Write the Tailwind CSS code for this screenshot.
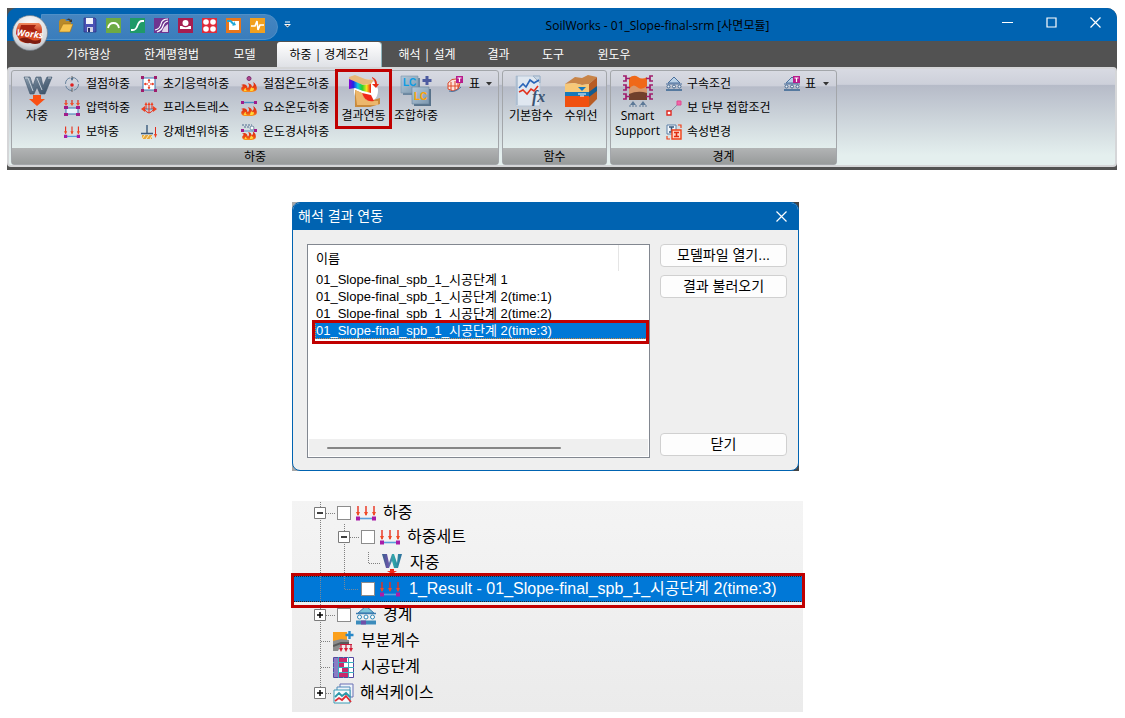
<!DOCTYPE html>
<html lang="ko">
<head>
  <meta charset="UTF-8">
  <meta name="viewport" content="width=device-width, initial-scale=1.0">
  <title>SoilWorks - 01_Slope-final-srm [사면모듈]</title>
  <script src="https://cdn.jsdelivr.net/npm/@tailwindcss/browser@4"></script>
</head>
<body class="bg-white font-['Open_Sans','Noto_Sans_CJK_KR',sans-serif] text-black">

  <!-- 공용 아이콘 -->
  <svg width="0" height="0" class="absolute" aria-hidden="true">
    <defs>
      <linearGradient id="gW" x1="0" y1="0" x2="1" y2="1"><stop offset="0" stop-color="#8fa0b0"/><stop offset=".45" stop-color="#5f7388"/><stop offset="1" stop-color="#34495f"/></linearGradient>
      <linearGradient id="gTreeW" x1="0" y1="0" x2="1" y2="0"><stop offset="0" stop-color="#35608c"/><stop offset=".3" stop-color="#6a55a8"/><stop offset=".55" stop-color="#2fa9a9"/><stop offset="1" stop-color="#2d6d9c"/></linearGradient>
      <linearGradient id="gFire" x1="0" y1="0" x2="0" y2="1"><stop offset="0" stop-color="#d82410"/><stop offset=".7" stop-color="#ee4c14"/><stop offset="1" stop-color="#fa9a1c"/></linearGradient>
      <linearGradient id="gRain" x1="0" y1="0" x2="1" y2="0"><stop offset="0" stop-color="#8a00d0"/><stop offset=".2" stop-color="#1c28e8"/><stop offset=".4" stop-color="#14c8e0"/><stop offset=".6" stop-color="#2ad02a"/><stop offset=".8" stop-color="#f4e61c"/><stop offset="1" stop-color="#f02010"/></linearGradient>
      <linearGradient id="gLc" x1="0" y1="0" x2="1" y2="1"><stop offset="0" stop-color="#b4c8d8"/><stop offset="1" stop-color="#7d98af"/></linearGradient>
      <radialGradient id="gOrb" cx=".5" cy=".3" r=".8"><stop offset="0" stop-color="#ffffff"/><stop offset=".7" stop-color="#d5d8dc"/><stop offset="1" stop-color="#8f959c"/></radialGradient>
      <linearGradient id="gOrbRed" x1="0" y1="0" x2="0" y2="1"><stop offset="0" stop-color="#f08a5e"/><stop offset=".5" stop-color="#c8351c"/><stop offset="1" stop-color="#e8602c"/></linearGradient>
    </defs>
    <symbol id="fire" viewBox="0 0 16 10">
      <path d="M1 9Q-1 6 2 4Q1 3 0 3Q4 1 6 4Q6 6 7 6Q9 4 7 1Q11 2 11 5Q14 3 12 0Q17 3 15.500 8Q14 10 11 10H4Q2 10 1 9Z" fill="url(#gFire)"/>
      <path d="M3 9q0-3 2-3-1 2 1 3zM9 9q0-3 2-4 0 2 2 1 0 3-2 3z" fill="#ffd83a"/>
    </symbol>
    <symbol id="loads" viewBox="0 0 20 16">
      <path d="M2 1v9M10 1v9M18 1v9" stroke="#e8301c" stroke-width="1.400"/>
      <path d="M0 7h4l-2 4zM8 7h4l-2 4zM16 7h4l-2 4z" fill="#f04a24"/>
      <path d="M2 13.500h16" stroke="#5aa0dc" stroke-width="1.600"/>
      <path d="M0 11.500h4v4H0zM16 11.500h4v4h-4z" fill="#a81ca8"/>
    </symbol>
    <symbol id="support" viewBox="0 0 16 16">
      <path d="M8 1l6 6H2z" fill="#b9d0e6" stroke="#4a6f9c"/>
      <path d="M0 8h16M0 13.500h16" stroke="#4a6f9c"/>
      <path d="M0 13h16v2H0z" fill="#55799f"/>
      <g fill="#e6eef6" stroke="#46688f"><circle cx="2.500" cy="10.500" r="1.500"/><circle cx="8" cy="10.500" r="1.500"/><circle cx="13.500" cy="10.500" r="1.500"/></g>
    </symbol>
    <symbol id="caret" viewBox="0 0 6 4"><path d="M0 0h6L3 3.500z" fill="#333"/></symbol>
  </svg>

  <!-- 메인 리본 -->
  <header class="relative mr-2 ml-[7px] mt-2 rounded-tr-[10px] bg-[#525252] pb-[3px]">
    <div class="flex h-[33px] rounded-tl-[10px] rounded-tr-[10px] bg-[#0063b1]">
      <div class="mt-[6px] ml-[34px] flex h-[26px] w-[237px] items-start gap-[9px] rounded-r-full border border-[#4f90c8] bg-gradient-to-b from-[#4585c0] to-[#3a7dbc] pt-[2px] pl-[16px]">
        <button type="button" aria-label="열기"><svg class="h-4 w-[15px]" viewBox="0 0 15 16"><path d="M1 14V4l2-2h4l1 2h5v4" fill="#b88a2a"/><path d="M1 15L5 7h10l-3 8z" fill="#f6c550" stroke="#a06f18" stroke-width=".6"/><path d="M8 3q3-3 5 0l1-1v3h-3l1-1q-2-2-4-1" fill="#3a3a3a"/></svg></button>
        <button type="button" aria-label="저장"><svg class="h-4 w-[15px]" viewBox="0 0 15 16"><path d="M2 1h11l1 1v13H2z" fill="#4a52b4" stroke="#2c3280" stroke-width=".7"/><path d="M4 1h7v6H4z" fill="#f2f4fa"/><path d="M5 10h6v5H5z" fill="#cfd3e6"/><path d="M6 11h2v4H6z" fill="#272c66"/></svg></button>
        <button type="button" aria-label="아치"><svg class="h-4 w-[15px]" viewBox="0 0 15 16"><path d="M0 1h15v15H0z" fill="#6eaa44"/><path d="M2 11q1-5 5.500-5T13 11" fill="none" stroke="#fff" stroke-width="1.800"/></svg></button>
        <button type="button" aria-label="사면"><svg class="h-4 w-[15px]" viewBox="0 0 15 16"><path d="M0 1h15v15H0z" fill="#1f9a68"/><path d="M1 13h2q3 0 4.500-4.500T12 4h2" fill="none" stroke="#fff" stroke-width="1.800"/></svg></button>
        <button type="button" aria-label="지반"><svg class="h-4 w-[15px]" viewBox="0 0 15 16"><path d="M0 1h15v15H0z" fill="#6f3590"/><path d="M8 15q1-5 6-8v8z" fill="#e2d2ea"/><path d="M1 13q5-1 6-6t7-5M3 15q5-2 6-6t5-5" fill="none" stroke="#fff" stroke-width="1.200"/></svg></button>
        <button type="button" aria-label="기초"><svg class="h-4 w-[15px]" viewBox="0 0 15 16"><path d="M0 1h15v15H0z" fill="#a61e50"/><circle cx="7.500" cy="6" r="3" fill="#fff"/><path d="M2 9h2q3.500 2.500 7 0h2v3H2z" fill="#fff"/></svg></button>
        <button type="button" aria-label="말뚝"><svg class="h-4 w-[15px]" viewBox="0 0 15 16"><path d="M0 1h15v15H0z" fill="#e02c3a"/><g fill="#fff"><circle cx="4" cy="5" r="2.800"/><circle cx="11" cy="5" r="2.800"/><circle cx="4" cy="12" r="2.800"/><circle cx="11" cy="12" r="2.800"/></g></svg></button>
        <button type="button" aria-label="침투"><svg class="h-4 w-[15px]" viewBox="0 0 15 16"><path d="M0 1h15v15H0z" fill="#e8761c"/><path d="M3 4h10v9H3z" fill="#fff"/><path d="M1 3h4l3 3v-2l2 4-4 1 1-1-3-3H1z" fill="#20a8d8"/></svg></button>
        <button type="button" aria-label="동해석"><svg class="h-4 w-[15px]" viewBox="0 0 15 16"><path d="M0 1h15v15H0z" fill="#f2a01e"/><path d="M1 9h4l2-5 1 9 2-5h4" fill="none" stroke="#fff" stroke-width="1.600"/></svg></button>
      </div>
      <button type="button" class="ml-[6px] w-[7px]" aria-label="빠른 실행 사용자 지정"><svg class="h-[7px] w-[7px]" viewBox="0 0 7 7"><path d="M1 1h5" stroke="#fff"/><path d="M0 3h7L3.500 6.500z" fill="#fff"/><path d="M2 4h3L3.500 5.500z" fill="#333"/></svg></button>
      <h1 class="flex-1 pt-[10px] pl-[38px] text-center text-xs leading-4">SoilWorks - 01_Slope-final-srm [사면모듈]</h1>
      <div class="flex h-[29px] text-white">
        <button type="button" class="flex w-[43px] items-center justify-center" aria-label="최소화"><svg class="h-[11px] w-[11px]" viewBox="0 0 11 11"><path d="M0 5.500h11" stroke="currentColor"/></svg></button>
        <button type="button" class="flex w-[44px] items-center justify-center" aria-label="최대화"><svg class="h-[11px] w-[11px]" viewBox="0 0 11 11"><path d="M1 1h9v9H1z" fill="none" stroke="currentColor" stroke-width="1.200"/></svg></button>
        <button type="button" class="flex w-[44px] items-center justify-center" aria-label="닫기"><svg class="h-[11px] w-[11px]" viewBox="0 0 11 11"><path d="M.5.5l10 10M10.500.5l-10 10" stroke="currentColor" stroke-width="1.200"/></svg></button>
      </div>
    </div>

    <!-- 시작 단추 -->
    <button type="button" class="absolute top-[7px] left-[5px]" aria-label="SoilWorks 메뉴">
      <svg class="h-[36px] w-[36px]" viewBox="0 0 36 36">
        <circle cx="18" cy="18" r="17.500" fill="url(#gOrb)" stroke="#6d7680" stroke-width=".6"/>
        <path d="M7 8h20q3 2 3 7l-1 12q-6 2-11 0-6 2-10-1l-4-7Q4 12 7 8z" fill="url(#gOrbRed)"/>
        <path d="M9 10h15l-2 3 4 3-5 3-2-3-7 1-5 4 1-7z" fill="#a5220f"/>
        <path d="M7 24q6-3 11 0t11 0l-1 4q-5 2-10 0-6 1-11-4z" fill="#7e1c10"/>
        <text x="18" y="22" font-size="9" font-weight="700" font-style="italic" text-anchor="middle" fill="#fff" transform="rotate(6 18 18)">Works</text>
      </svg>
    </button>

    <nav class="flex h-[26px] items-end pl-[43px] text-xs text-white">
      <button type="button" class="h-6 w-[77px]">기하형상</button>
      <button type="button" class="h-6 w-[89px]">한계평형법</button>
      <button type="button" class="mr-[4px] h-6 w-[57px]">모델</button>
      <button type="button" class="h-[25px] w-[104px] rounded-t-[3px] bg-gradient-to-b from-white to-[#dfe1e6] text-black shadow-[1px_0_0_#8fb4bc]">하중 | 경계조건</button>
      <button type="button" class="ml-[2px] h-6 w-[88px]">해석 | 설계</button>
      <button type="button" class="h-6 w-[55px]">결과</button>
      <button type="button" class="h-6 w-[54px]">도구</button>
      <button type="button" class="h-6 w-[68px]">윈도우</button>
    </nav>

    <div class="flex h-[100px] gap-[3px] rounded-[4px] border-2 border-[#d5d6d8] bg-[linear-gradient(#d8dae2_0%,#cdd0da_16%,#b6bbc8_17%,#e4efee_90%)] px-[2px] pt-px">
      <!-- 하중 그룹 -->
      <section class="flex w-[488px] shrink-0 flex-col rounded-[3px] border border-[#a3a6aa] bg-[linear-gradient(#d8dae2_0%,#cdd0da_16%,#b6bbc8_17%,#e4efee_85%)]">
        <div class="flex flex-1 pt-px">
          <button type="button" class="flex w-[50px] flex-col items-center gap-px pt-[3px] text-xs">
            <svg class="h-8 w-8" viewBox="0 0 32 32"><path d="M3 2h6l3 9 3-9h5l2 9 4-9h5l-7 17h-5l-3-7-3 7H9z" fill="url(#gW)" stroke="#3f556c" stroke-width=".6"/><path d="M4 3h3l5 13M16 3l5 12M27 3h3" fill="none" stroke="#c4ced8" stroke-width="1"/><path d="M12 20h8v4h4l-8 7-8-7h4z" fill="#fa5014"/></svg>
            <span>자중</span>
          </button>
          <div class="flex w-[77px] flex-col pl-[2px] text-xs">
            <button type="button" class="flex h-6 items-center gap-[6px]"><svg class="h-4 w-4" viewBox="0 0 16 16"><circle cx="8" cy="8" r="6.500" fill="none" stroke="#66829c" stroke-dasharray="8 2"/><path d="M8 0v4M8 12v4" stroke="#666"/><path d="M6.500 2h3L8 5z" fill="#53708c"/><circle cx="8" cy="9" r="1.800" fill="#e02020"/></svg>절점하중</button>
            <button type="button" class="flex h-6 items-center gap-[6px]"><svg class="h-4 w-4" viewBox="0 0 16 16"><path d="M2 0v4M8 0v4M14 0v4" stroke="#e02c1c" stroke-width="1.200"/><path d="M0 3h4L2 6zM6 3h4L8 6zM12 3h4l-2 3z" fill="#f0502c"/><path d="M2 8h12v6H2z" fill="#e8f2fa" stroke="#3f79b4"/><path d="M0 6h4v3H0zM12 6h4v3h-4zM0 13h4v3H0zM12 13h4v3h-4z" fill="#a01c8c"/></svg>압력하중</button>
            <button type="button" class="flex h-6 items-center gap-[6px]"><svg class="h-4 w-4"><use href="#loads"/></svg>보하중</button>
          </div>
          <div class="flex w-[100px] flex-col pl-[2px] text-xs">
            <button type="button" class="flex h-6 items-center gap-[6px]"><svg class="h-4 w-4" viewBox="0 0 16 16"><path d="M2 2h12v12H2z" fill="#fff" stroke="#3f79b4"/><path d="M8 3v4M8 9v4M3 8h4M9 8h4" stroke="#e02c1c"/><path d="M6.500 5L8 3l1.500 2zM6.500 11L8 13l1.500-2zM5 6.500L3 8l2 1.500zM11 6.500L13 8l-2 1.500z" fill="#f04020"/><path d="M0 0h3v3H0zM13 0h3v3h-3zM0 13h3v3H0zM13 13h3v3h-3z" fill="#a01c6c"/></svg>초기응력하중</button>
            <button type="button" class="flex h-6 items-center gap-[6px]"><svg class="h-4 w-4" viewBox="0 0 16 16"><path d="M2 9h12" stroke="#4a74a0"/><path d="M0 9l4-3v6zM16 9l-4-3v6z" fill="#f04020"/><path d="M3 9q3 4 5 4t5-4M5 9V4M8 13V4M11 9V4" fill="none" stroke="#e8301c"/><path d="M3.500 5L5 2l1.500 3zM6.500 5L8 2l1.500 3zM9.500 5L11 2l1.500 3z" fill="#f04020"/></svg>프리스트레스</button>
            <button type="button" class="flex h-6 items-center gap-[6px]"><svg class="h-4 w-4" viewBox="0 0 16 16"><path d="M6 1v8M0 9.500h12" stroke="#3b5a7c" stroke-width="1.400"/><path d="M1 11h10v4H1z" fill="#e8a83c"/><path d="M1 15l3-4M5 15l3-4M9 15l2-3" stroke="#fff0c0"/><path d="M14.500 3v8" stroke="#e02c1c"/><path d="M13 10h3l-1.500 4z" fill="#f04020"/></svg>강제변위하중</button>
          </div>
          <div class="flex w-[96px] flex-col pl-[2px] text-xs">
            <button type="button" class="flex h-6 shrink-0 items-center gap-[6px] whitespace-nowrap"><svg class="h-4 w-4 shrink-0" viewBox="0 0 16 16"><circle cx="8" cy="2.500" r="2" fill="#b0468c" stroke="#7c2c70"/><use href="#fire" y="6" width="16" height="10"/></svg>절점온도하중</button>
            <button type="button" class="flex h-6 shrink-0 items-center gap-[6px] whitespace-nowrap"><svg class="h-4 w-4 shrink-0" viewBox="0 0 16 16"><path d="M2 2.500h12" stroke="#4a8cc4" stroke-width="1.400"/><path d="M0 1h3v3H0zM13 1h3v3h-3z" fill="#a01c8c"/><use href="#fire" y="6" width="16" height="10"/></svg>요소온도하중</button>
            <button type="button" class="flex h-6 shrink-0 items-center gap-[6px] whitespace-nowrap"><svg class="h-4 w-4 shrink-0" viewBox="0 0 16 16"><path d="M1 1h10M3 3h10" stroke="#506c90" stroke-dasharray="2 1"/><circle cx="11" cy="4" r="2" fill="#fff" stroke="#7890a8"/><path d="M2 7h12" stroke="#4a8cc4"/><path d="M0 5h3v3H0zM13 5h3v3h-3z" fill="#a01c8c"/><use href="#fire" x="1" y="7" width="14" height="9"/></svg>온도경사하중</button>
          </div>
          <button type="button" class="relative flex w-[57px] flex-col items-center gap-px pt-[3px] text-xs">
            <svg class="h-8 w-8" viewBox="0 0 32 32"><circle cx="18" cy="16" r="12" fill="#fff"/><path d="M1 2l6-2 10 4 9 1-3 4-8 1-14-5z" fill="#e8b878"/><path d="M1 4l14 6 8-1v9l-8-2-8-3-6 1z" fill="url(#gRain)"/><path d="M7 15l7 3q2 8 8 8l10-3v6l-10 3H7z" fill="#c88a3c"/><path d="M7 15l7 3q2 8 8 8h8v4H9z" fill="#ecb76c"/><path d="M14 18l9 2 3 6q-9 2-12-8z" fill="#f02818"/><path d="M24 2q5 2 5 7h2l-3 4-4-4h3q0-4-3-6z" fill="#e82c14"/></svg>
            <span>결과연동</span>
            <span class="pointer-events-none absolute -top-[3px] left-0 h-[60px] w-[57px] border-3 border-[#c00000]"></span>
          </button>
          <button type="button" class="flex w-[48px] flex-col items-center gap-px pt-[3px] text-xs">
            <svg class="h-8 w-8" viewBox="0 0 32 32"><path d="M3 3h17v17H3z" fill="#6c87a0"/><path d="M1 1h17v17H1z" fill="url(#gLc)" stroke="#7895ad" stroke-width=".6"/><path d="M14 14h17v17H14z" fill="#58728a"/><path d="M12 12h17v17H12z" fill="url(#gLc)" stroke="#6784a0" stroke-width=".6"/><path d="M27 1v9M22.500 5.500h9" stroke="#4c5aa0" stroke-width="3"/><text x="3" y="11" font-size="10" font-weight="700" font-family="Liberation Sans" fill="#0c9ce4">LC</text><text x="14" y="25" font-size="10" font-weight="700" font-family="Liberation Sans" fill="#ffa400">LC</text></svg>
            <span>조합하중</span>
          </button>
          <button type="button" class="ml-[7px] flex h-6 items-center text-xs"><svg class="h-4 w-4" viewBox="0 0 16 16"><path d="M1 7q4-5 8-4l4 4-2 6-5 2-5-2z" fill="#fbe3dc" stroke="#d8482c"/><path d="M4 6v8M8 5v10M11 7v6M1 10h12" stroke="#e04a28"/><path d="M2 15q6 2 12-4" stroke="#4a74a0" fill="none"/><path d="M9 0h7v7H9z" fill="#b81c8c"/><path d="M10.500 2h4M12.500 2v4" stroke="#fff" stroke-width="1.200"/></svg><span class="ml-[6px]">표</span><svg class="ml-[6px] h-1 w-[6px]"><use href="#caret"/></svg></button>
        </div>
        <h2 class="h-4 bg-gradient-to-b from-[#b2b4b5] to-[#989b9b] text-center text-xs leading-[17px]">하중</h2>
      </section>

      <!-- 함수 그룹 -->
      <section class="flex w-[105px] shrink-0 flex-col rounded-[3px] border border-[#a3a6aa] bg-[linear-gradient(#d8dae2_0%,#cdd0da_16%,#b6bbc8_17%,#e4efee_85%)]">
        <div class="flex flex-1 pt-px pl-[3px]">
          <button type="button" class="flex w-[50px] flex-col items-center gap-px pt-[3px] text-xs">
            <svg class="h-8 w-8" viewBox="0 0 32 32"><path d="M1 1h24v30H1z" fill="#dfe7f0" stroke="#b7c5d5"/><path d="M2 1v29" stroke="#8da4bc"/><path d="M18 1l7 7V1z" fill="#c8d6e4" stroke="#9cb0c6"/><path d="M4 13l4-4 3 3 4-7 4 3 5-3" fill="none" stroke="#2864b8" stroke-width="1.600"/><path d="M4 17l4-2 4 4 4-5 3 2 4-5" fill="none" stroke="#e0301c" stroke-width="1.600"/><text x="17" y="27" font-size="16" font-style="italic" font-weight="700" font-family="Liberation Serif" fill="#3c5472">fx</text></svg>
            <span>기본함수</span>
          </button>
          <button type="button" class="flex w-[50px] flex-col items-center gap-px pt-[3px] text-xs">
            <svg class="h-8 w-8" viewBox="0 0 32 32"><path d="M0 9l10-7 7 1 6-3 9 2-8 7-7 1-8-2z" fill="#c88448"/><path d="M0 9l9-1 8 2 7-1v9H0z" fill="#f7c878"/><path d="M24 9l8-7v22l-8 8z" fill="#b85c24"/><path d="M0 17h24v4H0z" fill="#1878b8"/><path d="M0 21h24v11H0z" fill="#f05010"/><path d="M24 17l8-6v5l-8 6z" fill="#125c90"/><path d="M13 12h8l-4 4z" fill="#1478c0"/><path d="M13 19h8M15 21h4" stroke="#fff"/></svg>
            <span>수위선</span>
          </button>
        </div>
        <h2 class="h-4 bg-gradient-to-b from-[#b2b4b5] to-[#989b9b] text-center text-xs leading-[17px]">함수</h2>
      </section>

      <!-- 경계 그룹 -->
      <section class="flex w-[227px] shrink-0 flex-col rounded-[3px] border border-[#a3a6aa] bg-[linear-gradient(#d8dae2_0%,#cdd0da_16%,#b6bbc8_17%,#e4efee_85%)]">
        <div class="flex flex-1 pt-px">
          <button type="button" class="flex w-[53px] flex-col items-center gap-px pt-[3px] text-xs leading-[15px]">
            <svg class="h-8 w-8 shrink-0" viewBox="0 0 32 32"><path d="M7 3q5-4 9-1t9 0v23H7z" fill="#f06818"/><path d="M7 14q4-6 8-2t10-1v14H7z" fill="#d8986c"/><path d="M7 19q9-4 18-1v7H7z" fill="#70402c"/><g fill="none" stroke="#a01c6c" stroke-width="1.700"><path d="M1 1h3v5H1M1 10h3v5H1M1 19h3v5H1M31 1h-3v5h3M31 10h-3v5h3M31 19h-3v5h3M4 3.500h4M4 12.500h4M4 21.500h4M24 3.500h4M24 12.500h4M24 21.500h4"/></g><path d="M11 26l3 4H8zM21 26l3 4h-6z" fill="#5c7896"/><path d="M7 31h8M17 31h8" stroke="#5c7896" stroke-dasharray="2 1"/></svg>
            <span>Smart Support</span>
          </button>
          <div class="flex w-[118px] flex-col pl-[2px] text-xs">
            <button type="button" class="flex h-6 items-center gap-[5px]"><svg class="h-4 w-4"><use href="#support"/></svg>구속조건</button>
            <button type="button" class="flex h-6 items-center gap-[5px]"><svg class="h-4 w-4" viewBox="0 0 16 16"><path d="M4 12l8-8" stroke="#8294a8"/><path d="M11 1h4v4h-4z" fill="#f068a8" stroke="#e04890"/><path d="M1 11h4v4H1z" fill="#fff" stroke="#e02820" stroke-width="1.400"/></svg>보 단부 접합조건</button>
            <button type="button" class="flex h-6 items-center gap-[5px]"><svg class="h-4 w-4" viewBox="0 0 16 16"><path d="M1 1h9v9H1z" fill="#f2f6fa" stroke="#5c80a8"/><path d="M3 3h5M5.500 3v5M3 8h5" stroke="#38587c" stroke-width="1.500"/><path d="M6 6h9v9H6z" fill="#ffd8c8" stroke="#f04018" stroke-width="1.400"/><path d="M8 8.500h5M10.500 8v5M8 12.500h5" stroke="#e02c10" stroke-width="1.600"/><path d="M12 1h3v3M1 12v3h3" fill="none" stroke="#f04018" stroke-width="1.200"/></svg>속성변경</button>
          </div>
          <button type="button" class="ml-[2px] flex h-6 items-center text-xs"><svg class="h-4 w-4" viewBox="0 0 16 16"><use href="#support" width="16" height="16"/><path d="M9 0h7v7H9z" fill="#b81c8c"/><path d="M10.500 2h4M12.500 2v4" stroke="#fff" stroke-width="1.200"/></svg><span class="ml-[5px]">표</span><svg class="ml-[7px] h-1 w-[6px]"><use href="#caret"/></svg></button>
        </div>
        <h2 class="h-4 bg-gradient-to-b from-[#b2b4b5] to-[#989b9b] text-center text-xs leading-[17px]">경계</h2>
      </section>
    </div>
  </header>

  <!-- 해석 결과 연동 대화상자 -->
  <div class="mt-8 ml-[292px] w-[507px] bg-[linear-gradient(to_right,#a8a8a8_50%,#444_50%)] font-['Liberation_Sans','Noto_Sans_CJK_KR',sans-serif]">
    <div role="dialog" aria-labelledby="dlgTitle" class="overflow-hidden rounded-[8px] border border-[#0063b1] bg-[#efefef]">
      <div class="flex h-[27px] items-center justify-between bg-[#0063b1] pr-[11px] pl-[5px] text-white">
        <h2 id="dlgTitle" class="pb-[2px] text-sm leading-5">해석 결과 연동</h2>
        <button type="button" aria-label="닫기"><svg class="h-[11px] w-[11px]" viewBox="0 0 11 11"><path d="M.5.5l10 10M10.500.5l-10 10" stroke="currentColor" stroke-width="1.200"/></svg></button>
      </div>
      <div class="flex gap-[10px] pt-[14px] pr-[11px] pb-[12px] pl-[14px]">
        <div class="flex h-[214px] flex-1 flex-col border border-[#828790] bg-white px-px pb-px text-[13px] leading-[17px]">
          <table class="w-full">
            <thead>
              <tr class="h-[26px]">
                <th class="w-[309px] border-r border-[#e5e5e5] pl-[7px] text-left font-normal">이름</th>
                <th></th>
              </tr>
            </thead>
            <tbody>
              <tr><td colspan="2" class="p-0 pl-[7px]">01_Slope-final_spb_1_시공단계 1</td></tr>
              <tr><td colspan="2" class="p-0 pl-[7px]">01_Slope-final_spb_1_시공단계 2(time:1)</td></tr>
              <tr><td colspan="2" class="p-0 pl-[7px]">01_Slope-final_spb_1_시공단계 2(time:2)</td></tr>
              <tr>
                <td colspan="2" class="relative p-0 pl-[6px]">
                  <div class="bg-[#0078d7] pl-px text-white outline outline-dotted outline-[#d08a40] -outline-offset-1">01_Slope-final_spb_1_시공단계 2(time:3)</div>
                  <span class="pointer-events-none absolute -top-[2px] -right-px -bottom-[5px] left-[3px] border-3 border-[#c00000]"></span>
                </td>
              </tr>
            </tbody>
          </table>
          <div class="mt-auto flex h-[17px] items-center bg-[#efefef] pl-[18px]"><div class="h-[2px] w-[234px] rounded-full bg-[#858585]"></div></div>
        </div>
        <div class="flex w-[127px] flex-col gap-2 text-sm">
          <button type="button" class="flex h-[23px] items-center justify-center rounded-[4px] border border-[#d0d0d0] bg-[#fdfdfd] pb-[2px]">모델파일 열기...</button>
          <button type="button" class="flex h-[23px] items-center justify-center rounded-[4px] border border-[#d0d0d0] bg-[#fdfdfd] pb-[2px]">결과 불러오기</button>
          <button type="button" class="mt-auto mb-[2px] flex h-[23px] items-center justify-center rounded-[4px] border border-[#d0d0d0] bg-[#fdfdfd] pb-[2px]">닫기</button>
        </div>
      </div>
    </div>
  </div>

  <!-- 작업 트리 -->
  <ul class="mt-[30px] ml-[292px] w-[511px] bg-gradient-to-b from-[#f4f4f4] to-[#ebebeb] pb-[6px] font-['Liberation_Sans','Noto_Sans_CJK_KR',sans-serif] text-base leading-6">
    <li class="flex h-[23px] items-center overflow-hidden">
      <svg class="h-[26px] w-[45px] shrink-0" viewBox="0 0 45 26"><path d="M28.500 0v26M34 13.500h9" stroke="#808080" stroke-dasharray="1 1"/><path d="M22.500 7.500h11v11h-11z" fill="#fff" stroke="#7a7a7a"/><path d="M25 13h6" stroke="#000" stroke-width="1.500"/></svg>
      <input id="n1" type="checkbox" class="h-[14px] w-[14px] appearance-none border border-[#8c8c8c] bg-white">
      <svg class="ml-[5px] h-4 w-5"><use href="#loads"/></svg>
      <label for="n1" class="ml-[7px]">하중</label>
    </li>
    <li class="flex h-[26px] items-center">
      <svg class="h-[26px] w-[69px] shrink-0" viewBox="0 0 69 26"><path d="M28.500 0v26M52.500 0v26M58 13.500h9" stroke="#808080" stroke-dasharray="1 1"/><path d="M46.500 7.500h11v11h-11z" fill="#fff" stroke="#7a7a7a"/><path d="M49 13h6" stroke="#000" stroke-width="1.500"/></svg>
      <input id="n2" type="checkbox" class="h-[14px] w-[14px] appearance-none border border-[#8c8c8c] bg-white">
      <svg class="ml-[5px] h-4 w-5"><use href="#loads"/></svg>
      <label for="n2" class="ml-[7px]">하중세트</label>
    </li>
    <li class="flex h-[26px] items-center">
      <svg class="h-[26px] w-[90px] shrink-0" viewBox="0 0 90 26"><path d="M28.500 0v26M52.500 0v26M76.500 2v11.500h12" fill="none" stroke="#808080" stroke-dasharray="1 1"/></svg>
      <svg class="h-[22px] w-5" viewBox="0 0 20 22"><path d="M0 2h5l2 9 3-9h2l3 9 1-9h4l-4 14h-4l-2-7-3 7H4z" fill="url(#gTreeW)"/><path d="M5 19h3v-2h4v2h3l-5 3z" fill="#f02818"/></svg>
      <span class="ml-2">자중</span>
    </li>
    <li class="relative flex h-[26px] items-center border-y border-dotted border-[#222] bg-[#0078d7] text-white">
      <svg class="h-[26px] w-[69px] shrink-0" viewBox="0 0 69 26"><path d="M28.500 0v26M52.500 0v13.500h14" fill="none" stroke="#7a8896" stroke-dasharray="1 1"/></svg>
      <input id="n3" type="checkbox" class="h-[14px] w-[14px] appearance-none border border-[#8c8c8c] bg-white">
      <svg class="ml-[5px] h-4 w-5"><use href="#loads"/></svg>
      <label for="n3" class="ml-[9px]">1_Result - 01_Slope-final_spb_1_시공단계 2(time:3)</label>
      <span class="pointer-events-none absolute -top-1 -right-[2px] -bottom-[7px] -left-px border-3 border-[#c00000]"></span>
    </li>
    <li class="flex h-[26px] items-center">
      <svg class="h-[26px] w-[45px] shrink-0" viewBox="0 0 45 26"><path d="M28.500 0v26M34 13.500h9" stroke="#808080" stroke-dasharray="1 1"/><path d="M22.500 7.500h11v11h-11z" fill="#fff" stroke="#7a7a7a"/><path d="M25 13h6M28 10v6" stroke="#000" stroke-width="1.500"/></svg>
      <input id="n4" type="checkbox" class="h-[14px] w-[14px] appearance-none border border-[#8c8c8c] bg-white">
      <svg class="ml-[5px] h-5 w-5" viewBox="0 0 20 20"><path d="M10 1l8 7H2z" fill="#7cc4d8" stroke="#3c7cb0"/><path d="M0 8.500h20" stroke="#3c7cb0" stroke-width="1.500"/><g fill="#fff" stroke="#2f88b8"><circle cx="3.500" cy="12" r="2"/><circle cx="10" cy="12" r="2"/><circle cx="16.500" cy="12" r="2"/></g><path d="M0 15.500h20v4H0z" fill="#3c8cbc"/><path d="M5 15.500h5v4H5z" fill="#7050a8"/></svg>
      <label for="n4" class="ml-[7px]">경계</label>
    </li>
    <li class="flex h-[26px] items-center">
      <svg class="h-[26px] w-[41px] shrink-0" viewBox="0 0 41 26"><path d="M28.500 0v26M29 13.500h10" stroke="#808080" stroke-dasharray="1 1"/></svg>
      <svg class="h-[21px] w-[21px]" viewBox="0 0 21 21"><path d="M0 1h14v9H0z" fill="#fba01c"/><path d="M0 10l8-2 8 1v5H8l-3 6H0z" fill="#8c8c8c"/><path d="M0 15l8-3h8" stroke="#5a5a5a" fill="none" stroke-width="2"/><path d="M16.500 0v8M12.500 4h8" stroke="#2888c8" stroke-width="2.400"/><path d="M7 13.500h12M8 14v5M13 14v5M18 14v5" stroke="#c81c3c" stroke-width="1.200"/><path d="M6 17h4l-2 4zM11 17h4l-2 4zM16 17h4l-2 4z" fill="#d81c34"/></svg>
      <span class="ml-[7px]">부분계수</span>
    </li>
    <li class="flex h-[26px] items-center">
      <svg class="h-[26px] w-[41px] shrink-0" viewBox="0 0 41 26"><path d="M28.500 0v26M29 13.500h10" stroke="#808080" stroke-dasharray="1 1"/></svg>
      <svg class="h-[21px] w-[21px]" viewBox="0 0 21 21"><path d="M.5.5h20v20H.5z" fill="#fff" stroke="#5548a0"/><path d="M5.500 0v21M10.500 0v21M15.500 0v21M0 5.500h21M0 10.500h21M0 15.500h21" stroke="#3cb0c0"/><path d="M1 1h4v19H1z" fill="#8a7cc4"/><path d="M6 1h8v4H6zM6 6h5v4H6zM9 11h6v4H9zM6 16h9v4H6z" fill="#c8286c"/></svg>
      <span class="ml-[7px]">시공단계</span>
    </li>
    <li class="flex h-[26px] items-center">
      <svg class="h-[26px] w-[41px] shrink-0" viewBox="0 0 41 26"><path d="M28.500 0v8M34 13.500h6" stroke="#808080" stroke-dasharray="1 1"/><path d="M22.500 7.500h11v11h-11z" fill="#fff" stroke="#7a7a7a"/><path d="M25 13h6M28 10v6" stroke="#000" stroke-width="1.500"/></svg>
      <svg class="h-[21px] w-[21px]" viewBox="0 0 21 21"><path d="M7 1h13v13H7z" fill="#eef4fa" stroke="#6a70b4"/><path d="M4 4h13v13H4z" fill="#eef4fa" stroke="#5088b8"/><path d="M1 7h16v13H1z" fill="#f6fafc" stroke="#3c9cb4"/><path d="M2 14l4-4 3 3 4-3 4 4" fill="none" stroke="#2c98a8" stroke-width="1.800"/><path d="M2 18l4-3 3 2 4-4 5 6" fill="none" stroke="#e02c34" stroke-width="1.800"/></svg>
      <span class="ml-[6px]">해석케이스</span>
    </li>
  </ul>
</body>
</html>
